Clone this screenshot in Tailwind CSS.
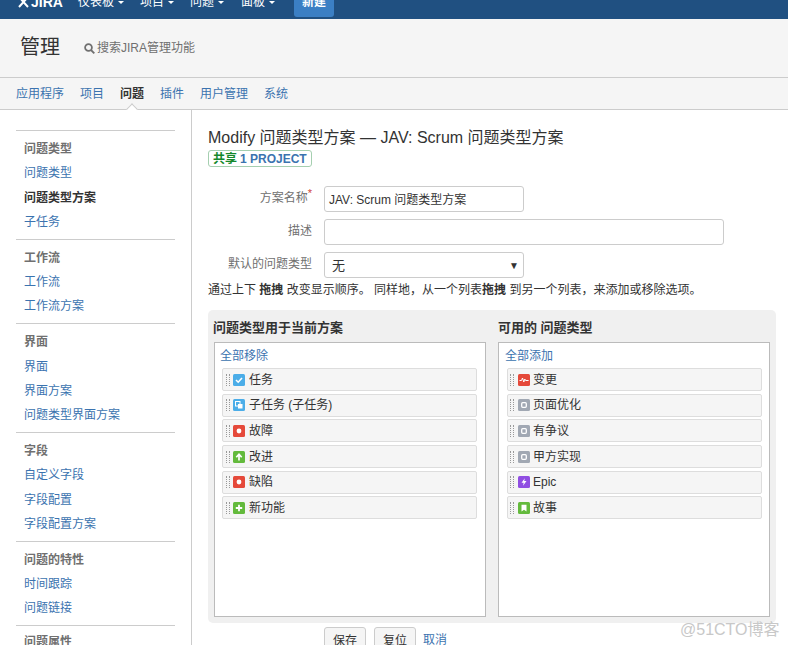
<!DOCTYPE html>
<html lang="zh">
<head>
    <meta charset="UTF-8">
    <title>JIRA 管理</title>
    <script src="https://cdn.jsdelivr.net/npm/@tailwindcss/browser@4"></script>
</head>
<body class="bg-white overflow-hidden font-['Liberation_Sans','Noto_Sans_CJK_SC',sans-serif] text-[12px] text-[#333]">
<div class="relative w-[788px] h-[645px] overflow-hidden">
    <!-- top bar, cut off by the screenshot -->
    <header class="h-[19px] bg-[#205081] overflow-hidden">
        <div class="flex items-center h-[40px] -mt-[18px] pl-[18px] text-white">
            <svg class="w-[11px] h-[14px] mr-[1px]" viewBox="0 0 11 14" fill="none" stroke="white" stroke-width="2"><path d="M1 2l9 10M10 2L1 12"/></svg>
            <span class="font-bold text-[14px] w-[48px] pl-[1px]">JIRA</span>
            <span class="w-[62px]">仪表板 <i class="inline-block align-middle ml-[1px] border-x-[3px] border-t-[3px] border-x-transparent border-t-white"></i></span>
            <span class="w-[50px]">项目 <i class="inline-block align-middle ml-[1px] border-x-[3px] border-t-[3px] border-x-transparent border-t-white"></i></span>
            <span class="w-[51px]">问题 <i class="inline-block align-middle ml-[1px] border-x-[3px] border-t-[3px] border-x-transparent border-t-white"></i></span>
            <span class="w-[53px]">面板 <i class="inline-block align-middle ml-[1px] border-x-[3px] border-t-[3px] border-x-transparent border-t-white"></i></span>
            <span class="flex items-center justify-center w-[40px] h-[30px] bg-[#3b7fc4] rounded-[3px] font-bold">新建</span>
        </div>
    </header>

    <!-- admin title + search -->
    <div class="flex items-center h-[59px] pl-[20px] bg-[#f5f5f5] border-b border-[#ccc]">
        <h1 class="text-[20px] w-[64px] -mt-[2px]">管理</h1>
        <svg class="w-[11px] h-[11px] mr-[2px]" viewBox="0 0 11 11" fill="none" stroke="#707070" stroke-width="1.8"><circle cx="4.5" cy="4.5" r="3.4"/><path d="M7 7l3.3 3.3"/></svg>
        <span class="text-[#707070]">搜索JIRA管理功能</span>
    </div>

    <!-- tabs -->
    <nav class="relative flex items-center gap-4 h-[32px] pl-[16px] bg-[#f5f5f5] border-b border-[#ccc] text-[#3b73af]">
        <a>应用程序</a>
        <a>项目</a>
        <a class="font-bold text-[#333]">问题</a>
        <a>插件</a>
        <a>用户管理</a>
        <a>系统</a>
        <i class="absolute left-[128px] -bottom-[4px] w-[8px] h-[8px] rotate-45 bg-white border-l border-t border-[#ccc]"></i>
    </nav>

    <div class="flex">
        <!-- sidebar -->
        <aside class="w-[192px] h-[536px] shrink-0 border-r border-[#ccc] pt-[20px] pl-[16px] pr-[16px]">
            <div class="border-t border-[#ccc] pt-[6px] pb-[4.75px] pl-[8px] w-[159px] leading-[24.25px] text-[#3b73af]">
                <h3 class="font-bold text-[#707070]">问题类型</h3>
                <a class="block">问题类型</a>
                <a class="block font-bold text-[#333]">问题类型方案</a>
                <a class="block">子任务</a>
            </div>
            <div class="border-t border-[#ccc] pt-[6px] pb-[4.75px] pl-[8px] w-[159px] leading-[24.25px] text-[#3b73af]">
                <h3 class="font-bold text-[#707070]">工作流</h3>
                <a class="block">工作流</a>
                <a class="block">工作流方案</a>
            </div>
            <div class="border-t border-[#ccc] pt-[6px] pb-[4.75px] pl-[8px] w-[159px] leading-[24.25px] text-[#3b73af]">
                <h3 class="font-bold text-[#707070]">界面</h3>
                <a class="block">界面</a>
                <a class="block">界面方案</a>
                <a class="block">问题类型界面方案</a>
            </div>
            <div class="border-t border-[#ccc] pt-[6px] pb-[4.75px] pl-[8px] w-[159px] leading-[24.25px] text-[#3b73af]">
                <h3 class="font-bold text-[#707070]">字段</h3>
                <a class="block">自定义字段</a>
                <a class="block">字段配置</a>
                <a class="block">字段配置方案</a>
            </div>
            <div class="border-t border-[#ccc] pt-[6px] pb-[4.75px] pl-[8px] w-[159px] leading-[24.25px] text-[#3b73af]">
                <h3 class="font-bold text-[#707070]">问题的特性</h3>
                <a class="block">时间跟踪</a>
                <a class="block">问题链接</a>
            </div>
            <div class="border-t border-[#ccc] pt-[4px] pl-[8px] w-[159px] leading-[24.25px]">
                <h3 class="font-bold text-[#707070]">问题属性</h3>
            </div>
        </aside>

        <!-- main -->
        <main class="flex-1 pl-[16px] pt-[18px]">
            <h2 class="text-[16px] leading-[20px]">Modify 问题类型方案 — JAV: Scrum 问题类型方案</h2>
            <span class="flex items-center w-[104px] h-[17px] mt-[2px] border border-[#a5cfb0] rounded-[3px] pl-[4px] font-bold text-[12px] text-[#3b73af]"><span class="text-[#14892c] mr-[3px]">共享</span>1 PROJECT</span>

            <div class="grid grid-cols-[104px_1fr] gap-x-[12px] gap-y-[7px] items-center mt-[19px]">
                <label class="text-right text-[#707070] -mt-[2px]">方案名称<sup class="text-[#d04437] text-[11px] leading-none">*</sup></label>
                <div class="flex items-center w-[200px] h-[26px] bg-white border border-[#ccc] rounded-[3px] pl-[4px] pt-[1px]">JAV: Scrum 问题类型方案</div>
                <label class="text-right text-[#707070] -mt-[2px]">描述</label>
                <div class="w-[400px] h-[26px] bg-white border border-[#ccc] rounded-[3px]"></div>
                <label class="text-right text-[#707070] -mt-[2px]">默认的问题类型</label>
                <div class="flex items-center justify-between w-[200px] h-[26px] bg-white border border-[#ccc] rounded-[3px] pl-[7px] pr-[4px] pt-[1px] text-[13px]">无<span class="text-[10px]">▼</span></div>
            </div>
            <p class="mt-[5px] leading-[14px]">通过上下 <b>拖拽</b> 改变显示顺序。 同样地，从一个列表<b>拖拽</b> 到另一个列表，来添加或移除选项。</p>

            <!-- scheme panel -->
            <div class="grid grid-cols-[272px_272px] gap-x-[12px] w-[568px] h-[313px] mt-[13px] px-[6px] bg-[#f0f0f0] rounded-[5px]">
                <div>
                    <h4 class="font-bold text-[13px] leading-[16px] pt-[10px] pb-[6px] -ml-[1px]">问题类型用于当前方案</h4>
                    <div class="h-[275px] bg-white border border-[#bbb] pt-[6px] px-[5px]">
                        <a class="block text-[#3b73af] leading-[14px] mb-[5px]">全部移除</a>
                        <ul class="ml-[2px] w-[255px] flex flex-col gap-[2.7px] text-[12px]">
                            <li class="flex items-center h-[23px] bg-[#f5f5f5] border border-[#ddd] rounded-[2px]">
                                <i class="w-[4px] h-[12px] ml-[3px] mr-[3px] border-x border-dotted border-[#999]"></i>
                                <svg class="w-[12px] h-[12px] mr-[4px]" viewBox="0 0 12 12"><rect width="12" height="12" rx="1.5" fill="#4bade8"/><path d="M3 6l2.200 2.200L9 4" fill="none" stroke="#fff" stroke-width="1.600"/></svg>
                                任务
                            </li>
                            <li class="flex items-center h-[23px] bg-[#f5f5f5] border border-[#ddd] rounded-[2px]">
                                <i class="w-[4px] h-[12px] ml-[3px] mr-[3px] border-x border-dotted border-[#999]"></i>
                                <svg class="w-[12px] h-[12px] mr-[4px]" viewBox="0 0 12 12"><rect width="12" height="12" rx="1.5" fill="#4bade8"/><rect x="2.500" y="2.500" width="4.500" height="4.500" fill="none" stroke="#fff"/><rect x="5" y="5" width="4.500" height="4.500" fill="#fff"/></svg>
                                子任务 (子任务)
                            </li>
                            <li class="flex items-center h-[23px] bg-[#f5f5f5] border border-[#ddd] rounded-[2px]">
                                <i class="w-[4px] h-[12px] ml-[3px] mr-[3px] border-x border-dotted border-[#999]"></i>
                                <svg class="w-[12px] h-[12px] mr-[4px]" viewBox="0 0 12 12"><rect width="12" height="12" rx="1.5" fill="#e5493a"/><circle cx="6" cy="6" r="2.400" fill="#fff"/></svg>
                                故障
                            </li>
                            <li class="flex items-center h-[23px] bg-[#f5f5f5] border border-[#ddd] rounded-[2px]">
                                <i class="w-[4px] h-[12px] ml-[3px] mr-[3px] border-x border-dotted border-[#999]"></i>
                                <svg class="w-[12px] h-[12px] mr-[4px]" viewBox="0 0 12 12"><rect width="12" height="12" rx="1.5" fill="#63ba3c"/><path d="M6 9.500V4M3.300 6.200L6 3.200l2.700 3" fill="none" stroke="#fff" stroke-width="1.700"/></svg>
                                改进
                            </li>
                            <li class="flex items-center h-[23px] bg-[#f5f5f5] border border-[#ddd] rounded-[2px]">
                                <i class="w-[4px] h-[12px] ml-[3px] mr-[3px] border-x border-dotted border-[#999]"></i>
                                <svg class="w-[12px] h-[12px] mr-[4px]" viewBox="0 0 12 12"><rect width="12" height="12" rx="1.5" fill="#e5493a"/><circle cx="6" cy="6" r="2.400" fill="#fff"/></svg>
                                缺陷
                            </li>
                            <li class="flex items-center h-[23px] bg-[#f5f5f5] border border-[#ddd] rounded-[2px]">
                                <i class="w-[4px] h-[12px] ml-[3px] mr-[3px] border-x border-dotted border-[#999]"></i>
                                <svg class="w-[12px] h-[12px] mr-[4px]" viewBox="0 0 12 12"><rect width="12" height="12" rx="1.5" fill="#63ba3c"/><path d="M6 2.800v6.400M2.800 6h6.400" stroke="#fff" stroke-width="1.800"/></svg>
                                新功能
                            </li>
                        </ul>
                    </div>
                </div>
                <div>
                    <h4 class="font-bold text-[13px] leading-[16px] pt-[10px] pb-[6px]">可用的 问题类型</h4>
                    <div class="h-[275px] bg-white border border-[#bbb] pt-[6px] px-[6px]">
                        <a class="block text-[#3b73af] leading-[14px] mb-[5px]">全部添加</a>
                        <ul class="ml-[2px] w-[255px] flex flex-col gap-[2.7px] text-[12px]">
                            <li class="flex items-center h-[23px] bg-[#f5f5f5] border border-[#ddd] rounded-[2px]">
                                <i class="w-[4px] h-[12px] ml-[2px] mr-[4px] border-x border-dotted border-[#999]"></i>
                                <svg class="w-[12px] h-[12px] mr-[3px]" viewBox="0 0 12 12"><rect width="12" height="12" rx="1.5" fill="#e5493a"/><path d="M1.500 6.500h2l1-2.500 1.300 4 1-3 .8 1.500h3" fill="none" stroke="#fff"/></svg>
                                变更
                            </li>
                            <li class="flex items-center h-[23px] bg-[#f5f5f5] border border-[#ddd] rounded-[2px]">
                                <i class="w-[4px] h-[12px] ml-[2px] mr-[4px] border-x border-dotted border-[#999]"></i>
                                <svg class="w-[12px] h-[12px] mr-[3px]" viewBox="0 0 12 12"><rect width="12" height="12" rx="1.5" fill="#a1a8b3"/><rect x="3.700" y="3.700" width="4.600" height="4.600" rx="1" fill="none" stroke="#fff" stroke-width="1.300"/></svg>
                                页面优化
                            </li>
                            <li class="flex items-center h-[23px] bg-[#f5f5f5] border border-[#ddd] rounded-[2px]">
                                <i class="w-[4px] h-[12px] ml-[2px] mr-[4px] border-x border-dotted border-[#999]"></i>
                                <svg class="w-[12px] h-[12px] mr-[3px]" viewBox="0 0 12 12"><rect width="12" height="12" rx="1.5" fill="#a1a8b3"/><rect x="3.700" y="3.700" width="4.600" height="4.600" rx="1" fill="none" stroke="#fff" stroke-width="1.300"/></svg>
                                有争议
                            </li>
                            <li class="flex items-center h-[23px] bg-[#f5f5f5] border border-[#ddd] rounded-[2px]">
                                <i class="w-[4px] h-[12px] ml-[2px] mr-[4px] border-x border-dotted border-[#999]"></i>
                                <svg class="w-[12px] h-[12px] mr-[3px]" viewBox="0 0 12 12"><rect width="12" height="12" rx="1.5" fill="#a1a8b3"/><rect x="3.700" y="3.700" width="4.600" height="4.600" rx="1" fill="none" stroke="#fff" stroke-width="1.300"/></svg>
                                甲方实现
                            </li>
                            <li class="flex items-center h-[23px] bg-[#f5f5f5] border border-[#ddd] rounded-[2px]">
                                <i class="w-[4px] h-[12px] ml-[2px] mr-[4px] border-x border-dotted border-[#999]"></i>
                                <svg class="w-[12px] h-[12px] mr-[3px]" viewBox="0 0 12 12"><rect width="12" height="12" rx="1.5" fill="#904ee2"/><path d="M6.800 2.200L3.500 6.800h2.200L5 9.800l3.500-4.800H6.200z" fill="#fff"/></svg>
                                Epic
                            </li>
                            <li class="flex items-center h-[23px] bg-[#f5f5f5] border border-[#ddd] rounded-[2px]">
                                <i class="w-[4px] h-[12px] ml-[2px] mr-[4px] border-x border-dotted border-[#999]"></i>
                                <svg class="w-[12px] h-[12px] mr-[3px]" viewBox="0 0 12 12"><rect width="12" height="12" rx="1.5" fill="#63ba3c"/><path d="M3.500 2.700h5v6.800L6 7.700 3.500 9.500z" fill="#fff"/></svg>
                                故事
                            </li>
                        </ul>
                    </div>
                </div>
            </div>

            <div class="flex items-start mt-[4px] ml-[116px]">
                <button class="w-[42px] h-[28px] bg-[#f5f5f5] border border-[#ccc] rounded-[3px]">保存</button>
                <button class="w-[42px] h-[28px] ml-[8px] bg-[#f5f5f5] border border-[#ccc] rounded-[3px]">复位</button>
                <a class="ml-[7px] pt-[4px] text-[#3b73af]">取消</a>
            </div>
        </main>
    </div>
    <!-- watermark over the page -->
    <span class="absolute left-[680px] top-[618px] text-[16px] text-[#c8c8c8]">@51CTO博客</span>
</div>
</body>
</html>
